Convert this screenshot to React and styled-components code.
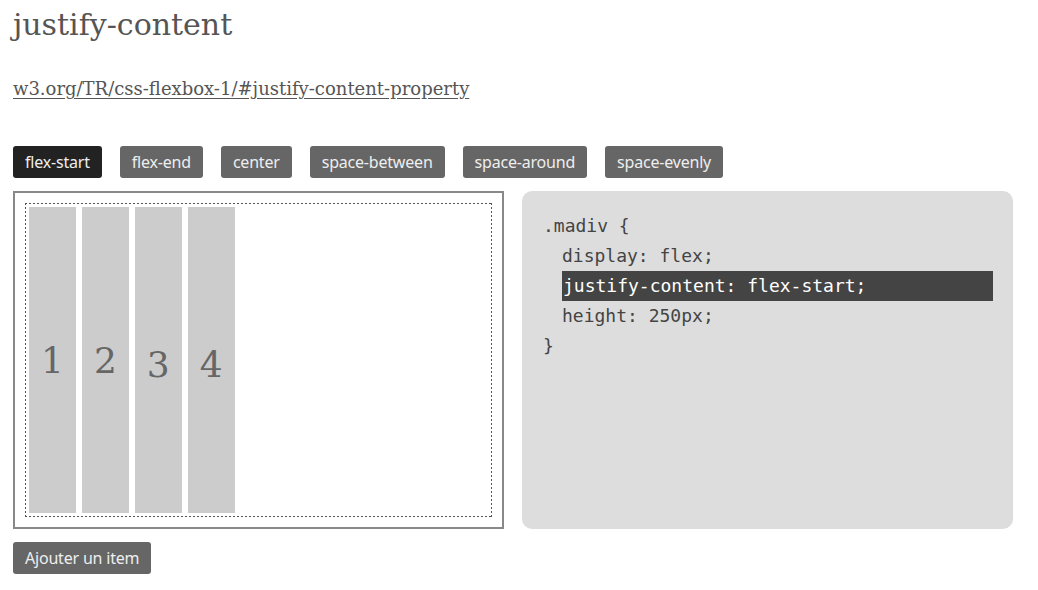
import React, { useState } from "react";
import styled, { createGlobalStyle } from "styled-components";

const Global = createGlobalStyle`
  html, body { margin: 0; padding: 0; background: #fff; }
  body { font-family: "DejaVu Serif", Georgia, serif; color: #555; }
`;

const Page = styled.div`
  padding: 0 13px;
  width: 1001px;
`;

const Title = styled.h1`
  margin: 0;
  padding-top: 5px;
  font-family: "DejaVu Serif", Georgia, serif;
  font-weight: normal;
  font-size: 30px;
  line-height: 40px;
  color: #555;
`;

const SpecLink = styled.a`
  display: inline-block;
  margin-top: 33px;
  font-family: "DejaVu Serif", Georgia, serif;
  font-size: 18px;
  line-height: 22px;
  color: #555;
  text-decoration: underline;
  text-underline-offset: 3px;
`;

const Toolbar = styled.div`
  display: flex;
  gap: 18px;
  margin-top: 46px;
`;

const Btn = styled.button`
  font-family: "Noto Sans", "DejaVu Sans", sans-serif;
  font-size: 16px;
  height: 32px;
  padding: 0 12px;
  border: none;
  border-radius: 3px;
  background: ${(p) => (p.$active ? "#222" : "#666")};
  color: #eee;
  cursor: pointer;
  line-height: 32px;
  letter-spacing: -0.2px;
`;

const Row = styled.div`
  display: flex;
  gap: 18px;
  margin-top: 13px;
  align-items: stretch;
`;

const Demo = styled.div`
  width: 491px;
  box-sizing: border-box;
  border: 2px solid #888;
  padding: 10px;
`;

const FlexBox = styled.div`
  display: flex;
  justify-content: ${(p) => p.$jc};
  height: 312px;
  padding: 1px;
  background:
    linear-gradient(to right, #555 50%, transparent 0) top left / 4px 1px repeat-x,
    linear-gradient(to right, #555 50%, transparent 0) bottom left / 4px 1px repeat-x,
    linear-gradient(to bottom, #555 50%, transparent 0) top left / 1px 4px repeat-y,
    linear-gradient(to bottom, #555 50%, transparent 0) top right / 1px 4px repeat-y;
`;

const Item = styled.div`
  display: flex;
  align-items: center;
  justify-content: center;
  margin: 3px;
  padding: 0 12px;
  background: #ccc;
  color: #666;
  font-family: "DejaVu Serif", Georgia, serif;
  font-size: 36px;
  padding-top: ${(p) => p.$dy}px;
`;

const Code = styled.pre`
  margin: 0;
  width: 491px;
  box-sizing: border-box;
  background: #ddd;
  border-radius: 10px;
  padding: 20px;
  font-family: "DejaVu Sans Mono", "Liberation Mono", monospace;
  font-size: 18px;
  line-height: 30px;
  color: #444;
`;

const Line = styled.div`
  padding-left: ${(p) => (p.$indent ? "20px" : "1px")};
`;

const Hl = styled.div`
  margin-left: 20px;
  padding-left: 1px;
  background: #444;
  color: #fff;
`;

const AddBtn = styled(Btn)`
  margin-top: 13px;
`;

const modes = ["flex-start", "flex-end", "center", "space-between", "space-around", "space-evenly"];

export default function App() {
  const [mode, setMode] = useState("flex-start");
  const [items, setItems] = useState([1, 2, 3, 4]);
  return (
    <Page>
      <Global />
      <Title>justify-content</Title>
      <SpecLink href="#">w3.org/TR/css-flexbox-1/#justify-content-property</SpecLink>
      <Toolbar>
        {modes.map((m) => (
          <Btn key={m} $active={m === mode} onClick={() => setMode(m)}>
            {m}
          </Btn>
        ))}
      </Toolbar>
      <Row>
        <Demo>
          <FlexBox $jc={mode}>
            {items.map((n) => (
              <Item key={n} $dy={n > 2 ? 8 : 0}>{n}</Item>
            ))}
          </FlexBox>
        </Demo>
        <Code>
          <Line>.madiv {"{"}</Line>
          <Line $indent>display: flex;</Line>
          <Hl>justify-content: {mode};</Hl>
          <Line $indent>height: 250px;</Line>
          <Line>{"}"}</Line>
        </Code>
      </Row>
      <AddBtn onClick={() => setItems([...items, items.length + 1])}>Ajouter un item</AddBtn>
    </Page>
  );
}
